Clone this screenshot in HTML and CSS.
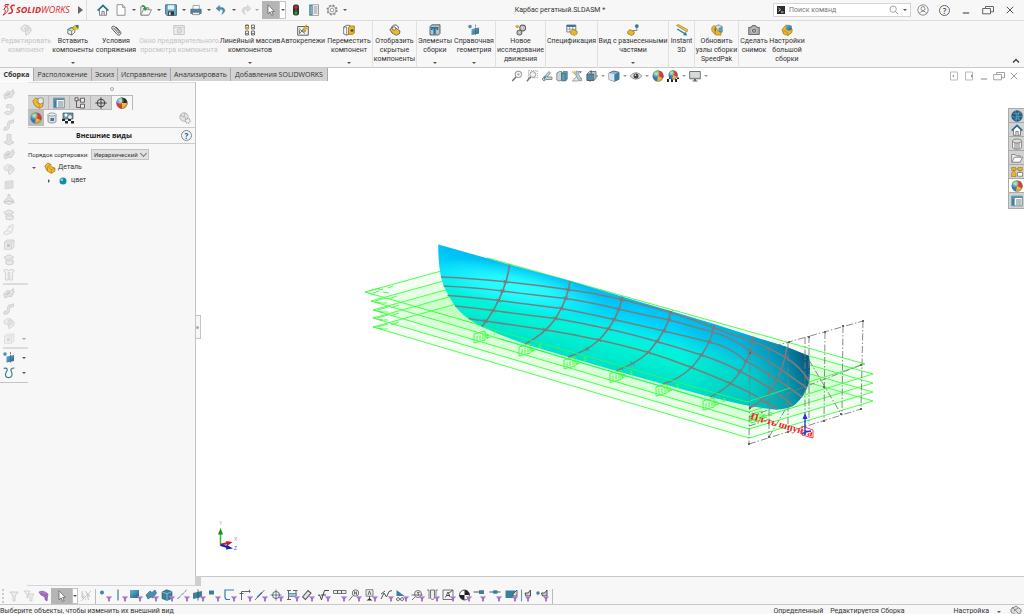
FILE: index.html
```html
<!DOCTYPE html>
<html lang="ru">
<head>
<meta charset="utf-8">
<title>Карбас регатный.SLDASM</title>
<link rel="stylesheet" href="styles.css">
</head>
<body>
<svg class="defs" width="0" height="0" aria-hidden="true">
  <defs>
    <linearGradient id="gb" x1="0" y1="0" x2="1" y2="1"><stop offset="0" stop-color="#6fb3d0"/><stop offset="1" stop-color="#1b6488"/></linearGradient>
    <radialGradient id="gs" cx=".35" cy=".3" r=".8"><stop offset="0" stop-color="#fff" stop-opacity=".75"/><stop offset=".5" stop-color="#fff" stop-opacity="0"/><stop offset="1" stop-color="#000" stop-opacity=".35"/></radialGradient>
    <symbol id="funnel" viewBox="0 0 6 6"><path d="M0 .4h6L3.9 3v2.6H2.1V3z" fill="#a06cc0"/><path d="M.3.4h5.4v.8H.9z" fill="#c9a5dc"/></symbol>
    <symbol id="home" viewBox="0 0 12 12"><path d="M2.5 5.5v5.8h7V5.5L6 2.2z" fill="#fff" stroke="#555" stroke-width=".7"/><path d="M.6 6.6 6 1.4l5.4 5.2" fill="none" stroke="#2b6f91" stroke-width="1.5"/><path d="M4.9 11.2V7.4h2.3v3.8" fill="#eee" stroke="#555" stroke-width=".7"/></symbol>
    <symbol id="doc" viewBox="0 0 12 12"><path d="M2 .7h5.5L10 3.3v8H2z" fill="#fff" stroke="#888" stroke-width=".9"/><path d="M7.4.7v2.7H10" fill="none" stroke="#888" stroke-width=".8"/></symbol>
    <symbol id="open" viewBox="0 0 12 12"><path d="M.8 11V2.6h3l1 1.2h4V11z" fill="#eee" stroke="#777" stroke-width=".8"/><path d="M.9 11.1 3.4 5.7h8.1L8.9 11.1z" fill="#fafafa" stroke="#777" stroke-width=".8"/><path d="M1.8 1.2c2-.8 3.6.5 4 2.5h1.7L5.1 7 2.8 3.9h1.4c-.3-1-.9-1.7-2.4-1.6z" fill="#2d9a37"/></symbol>
    <symbol id="save" viewBox="0 0 12 12"><path d="M.6.8h10.8v10.6H2L.6 10z" fill="#6aa8c6" stroke="#2c5d78" stroke-width=".8"/><path d="M2.8 1.2h6.4v4.3H2.8z" fill="#e6f0f5"/><path d="M3.2 7.4h5.8v4H3.2z" fill="#333"/><path d="M4 8.2h1.7v2.7H4z" fill="#ddd"/></symbol>
    <symbol id="print" viewBox="0 0 12 12"><path d="M3 1.5h6.3V6H3z" fill="#fff" stroke="#888" stroke-width=".7"/><path d="M.8 5.2h10.4v4.3H.8z" fill="#4b87a8" stroke="#355c70" stroke-width=".6"/><path d="M2.5 8.3h7v2.3h-7z" fill="#f2f2f2" stroke="#555" stroke-width=".6"/></symbol>
    <symbol id="undo" viewBox="0 0 12 12"><path d="M4.600 1.200 1 4.400l3.600 3.200V5.700C8 5 8.800 7 6.600 10.400 11.600 8 11 2.800 4.600 3.200z" fill="#4a8db3" stroke="#3b7290" stroke-width=".3"/></symbol>
    <symbol id="redo" viewBox="0 0 12 12"><path d="M7.400 1.200 11 4.400 7.400 7.600V5.700C4 5 3.200 7 5.400 10.400.4 8 1 2.800 7.400 3.200z" fill="#ddd" stroke="#bbb" stroke-width=".5"/></symbol>
    <symbol id="cursor" viewBox="0 0 12 12"><path d="M3 .8v9l2.1-2 1.6 3.6 1.5-.7-1.6-3.4h2.8z" fill="#fff" stroke="#555" stroke-width=".7"/></symbol>
    <symbol id="light" viewBox="0 0 12 12"><rect x="3" y=".4" width="6" height="11.2" rx="2.4" fill="#333"/><circle cx="6" cy="3.1" r="1.7" fill="#d22"/><circle cx="6" cy="6.1" r="1" fill="#555"/><circle cx="6" cy="9" r="1.7" fill="#2a9d3a"/></symbol>
    <symbol id="list" viewBox="0 0 12 12"><path d="M1.500.8h9v10.600h-9z" fill="#fff" stroke="#777" stroke-width=".7"/><path d="M1.700 1h3v10.200h-3z" fill="#4a89a9"/><path d="M5.500 3h4M5.500 5h4M5.500 7h4M5.500 9h4" stroke="#555" stroke-width=".7"/><path d="M2.500 3h1.300M2.500 5h1.300M2.500 7h1.300M2.500 9h1.300" stroke="#fff" stroke-width=".8"/></symbol>
    <symbol id="gear" viewBox="0 0 12 12"><circle cx="6" cy="6" r="4.700" fill="none" stroke="#888" stroke-width="1.700" stroke-dasharray="1.900 1.790"/><circle cx="6" cy="6" r="4" fill="#f5f5f5" stroke="#888" stroke-width=".8"/><circle cx="6" cy="6" r="1.800" fill="#fff" stroke="#888" stroke-width=".8"/></symbol>
    <symbol id="part" viewBox="0 0 12 12"><path d="M.8 4.2 3.7 1l3 1.2.5 2.5 3.9 1.5-.3 3L7.3 11.3 3 8.8z" fill="#f3bd2d" stroke="#9b7009" stroke-width=".7"/><path d="M3.9 4.4 6.7 2.3M3.8 4.4l-.6 4.3M7.3 7.7l3.6-1.5M7.3 7.7v3.5M3.8 4.4l3.5 3.3" fill="none" stroke="#a97c0e" stroke-width=".6"/></symbol>
    <symbol id="asmtab" viewBox="0 0 12 12"><path d="M.8 4.200 3.700 1l3 1.200.5 2.500 3.900 1.500-.3 3L7.300 11.300 3 8.800z" fill="#f3bd2d" stroke="#9b7009" stroke-width=".7"/><path d="M6 1.500 9 .7l2.300 1.200v3.800L8.500 7 6 5.500z" fill="#e4e9ec" stroke="#666" stroke-width=".6"/><path d="m3.800 4.400 3.500 3.300v3.500" fill="none" stroke="#a97c0e" stroke-width=".6"/></symbol>
    <symbol id="insert" viewBox="0 0 12 12"><path d="M.8 5.4 4.2 3.4l3.6 1v3.8L4.8 11 .8 9.6z" fill="#eef2e8" stroke="#555" stroke-width=".8"/><path d="M.8 5.4 4.6 7l3.2-2.6M4.6 7v4" fill="none" stroke="#555" stroke-width=".7"/><path d="M2.3 6.5c.5-3 2.2-3.6 4-3.2V1.8l2.4 2.5-2.4 2V5C4.8 4.6 3.5 5 2.3 6.5z" fill="#55b04c"/><circle cx="9" cy="3.4" r="2.7" fill="#f0bd33"/><path d="M8.500 1h3v3.400L9.400 3.300z" fill="#27789f"/></symbol>
    <symbol id="clip" viewBox="0 0 12 12"><path d="M3.300 3.600 8 8.800c.8.900 2-.2 1.200-1.100L4.600 2.600C3.200 1.100.7 3.200 2.200 4.900l4.700 5.300c2.200 2.300 5.200-.3 3.300-2.700L6 2.800" fill="none" stroke="#555" stroke-width="1"/></symbol>
    <symbol id="pat" viewBox="0 0 12 12"><g fill="#eee" stroke="#555" stroke-width=".8"><path d="M1.500 1h3v4h-3zM7.500 1h3v4h-3zM1.500 7h3v4h-3zM7.500 7h3v4h-3z"/></g><path d="M1.500 2.800h3V5h-3z" fill="#e3a91d"/><path d="M2 1.400h2M8 3.500h2M2 9.500h2M8 9.500h2" stroke="#555" stroke-width=".7"/></symbol>
    <symbol id="auto" viewBox="0 0 12 12"><path d="M.7 2.500h10.600v8.700H.7z" fill="#eee" stroke="#555" stroke-width=".9"/><path d="m2 10 6-6M2 4.500l6 5M4 7h5M2.500 6v3" stroke="#666" stroke-width=".8"/><path d="m9.500.5-4 5 2-.2-1 3.500 4-5-2 .2z" fill="#f2b92b" stroke="#a67809" stroke-width=".4"/></symbol>
    <symbol id="move" viewBox="0 0 12 12"><path d="M.7 3 3.500 1.300h3v8.500L3.700 11.200.7 10z" fill="#fff" stroke="#555" stroke-width=".8"/><path d="M.7 3h3v8" fill="none" stroke="#555" stroke-width=".7"/><path d="M5.500 3.500 7 2h4.300v7L9.800 10.300H5.500z" fill="#f0b929" stroke="#8d6500" stroke-width=".7"/><path d="m7 6.500 2-1.700 2 1.700-2 1.700z" fill="#555"/></symbol>
    <symbol id="gears" viewBox="0 0 12 12"><g fill="#ddd" stroke="#666" stroke-width="1.100"><circle cx="7.700" cy="4" r="2.900"/><circle cx="4.400" cy="8.600" r="2.400"/></g><circle cx="7.700" cy="4" r="1.100" fill="#fff" stroke="#777" stroke-width=".5"/><circle cx="4.400" cy="8.600" r=".9" fill="#fff" stroke="#777" stroke-width=".5"/><circle cx="2.200" cy="2.600" r="1.700" fill="#dca325"/></symbol>
    <symbol id="ballgear" viewBox="0 0 12 12"><circle cx="5" cy="5" r="4.200" fill="#e3e3e3" stroke="#aaa" stroke-width=".8"/><path d="M5 5 1.500 3.500M5 5l1-4M5 5l3 2.500" stroke="#aaa" stroke-width=".8"/><circle cx="8.800" cy="8.800" r="2.300" fill="#f4f4f4" stroke="#999" stroke-width="1.100" stroke-dasharray="1.200 .6"/></symbol>
    <symbol id="hidden" viewBox="0 0 12 12"><path d="M2.500 4.500c0-4.700 7-4.700 7 0" fill="none" stroke="#666" stroke-width="1"/><path d="M.8 5.500 3.700 3l3 1 4.300 3-.4 2.500-3.300 1.800L3 9z" fill="#efb928" stroke="#555" stroke-width=".8"/><circle cx="5" cy="4.500" r="1.700" fill="#eee" stroke="#555" stroke-width=".7"/></symbol>
    <symbol id="elem" viewBox="0 0 12 12"><path d="M1 2.500 3 .8h8v8.700L9.500 11H1z" fill="#b3c3cb" stroke="#444" stroke-width=".8"/><path d="M2 3h7.300v3H7.500V4.600H6.700v6H4.500v-6h-.8V6H2z" fill="#2b7198"/></symbol>
    <symbol id="refgeo" viewBox="0 0 12 12"><path d="m3.500 5 7.500-1.500v6L3.500 11z" fill="url(#gb)"/><circle cx="2" cy="2.600" r="1.800" fill="#4b92b5"/><path d="M7.500.6v10.900" stroke="#555" stroke-width=".7" stroke-dasharray="2 .8"/></symbol>
    <symbol id="bom" viewBox="0 0 12 12"><path d="M.8 1h9v7h-9z" fill="#fff" stroke="#555" stroke-width=".7"/><path d="M.8 1h9v2h-9z" fill="#347b9f"/><path d="M3.800 1v7M6.800 1v7M.8 5.200h9" stroke="#666" stroke-width=".6"/><path d="m4.700 7.300 2.200-2 4.300 2v2.500L8.500 11.500 4.700 10z" fill="#edb52c" stroke="#856209" stroke-width=".5"/></symbol>
    <symbol id="explode" viewBox="0 0 12 12"><circle cx="9.800" cy="2.100" r="1.900" fill="#2d7ba0"/><path d="M9.800 3.500v3H5.500" fill="none" stroke="#555" stroke-width=".7"/><path d="m.7 7.500 2.200-2 4.400 2.300-.3 2.300-2.500 1.400L.7 9.700z" fill="#edb52c" stroke="#856209" stroke-width=".6"/></symbol>
    <symbol id="instant" viewBox="0 0 12 12"><path d="m.5 1.500 1.700-1L11.500 5.500 11 8z" fill="#f4cd46" stroke="#916d0c" stroke-width=".6"/><path d="m2.500 2.500.8-.8M4.500 3.700l.8-.8M6.500 5l.8-.8" stroke="#755" stroke-width=".5"/><path d="m.8 5.500 7 4.300-.5 1.500 4 .2-2-3.700-.7 1L1.500 4.600z" fill="#2f7da3"/></symbol>
    <symbol id="speed" viewBox="0 0 12 12"><path d="M4 2.500 7.500.8l3.700 1.700v5.600L7.500 10z" fill="#d9e2e6" stroke="#555" stroke-width=".6"/><path d="M7.500 4v6l3.700-1.900V2.500z" fill="#5b9cbb"/><path d="M.8 3.500 3 1.300l5 6.500 2 .3v3H4.500L.8 7z" fill="#eeb52a" stroke="#856209" stroke-width=".5"/><path d="M4.200 4v3.500M4.200 8.500v1" stroke="#444" stroke-width=".9"/></symbol>
    <symbol id="camera" viewBox="0 0 12 12"><path d="M.7 3.300h2.500l1-1.700h3.500l1 1.700h2.600v7.200H.7z" fill="#aaa" stroke="#555" stroke-width=".8"/><circle cx="6" cy="6.700" r="2.600" fill="#666" stroke="#eee" stroke-width=".7"/><circle cx="6" cy="6.700" r="1" fill="#bbb"/></symbol>
    <symbol id="large" viewBox="0 0 12 12"><path d="M1 5.500 5 1l3 .5 3.200 4-.4 3L7 11.500 2.500 10z" fill="#eeb52a" stroke="#856209" stroke-width=".6"/><path d="M5 2 7.500.8l3.200 1v3.700L8 6.800 5 5.500z" fill="url(#gb)"/><path d="m2 6 5 3v2.500" fill="none" stroke="#987316" stroke-width=".5"/></symbol>
    <symbol id="ghost" viewBox="0 0 12 12"><path d="M.8 4 4.500 1l3.500.7 3.200 3-.5 3L6 11.300 5.500 7.500 2 6.500z" fill="#ececec" stroke="#c6c6c6" stroke-width=".9"/><circle cx="7" cy="5" r="2.200" fill="#ddd" stroke="#c4c4c4" stroke-width=".6"/></symbol>
    <symbol id="preview" viewBox="0 0 12 12"><path d="M.8 1.500h10.500v9H.8z" fill="#eee" stroke="#c8c8c8"/><path d="M.8 3.300h10.500" stroke="#ccc"/><path d="m4.300 5.500 2-1.500 2.500 1v3l-2.200 1.500-2.300-1z" fill="#ddd" stroke="#bbb" stroke-width=".6"/></symbol>
    <symbol id="zoomf" viewBox="0 0 12 12"><circle cx="7.400" cy="4.400" r="3.300" fill="#eef4f7" stroke="#888" stroke-width=".9"/><path d="m5 7-3.800 4" stroke="#777" stroke-width="1.500"/><path d="M6 4.400h3M7.400 3v3" stroke="#999" stroke-width=".6"/></symbol>
    <symbol id="zooma" viewBox="0 0 12 12"><path d="M2.500.7h8.800v7H2.500z" fill="none" stroke="#888" stroke-width=".7" stroke-dasharray="1.300 .9"/><circle cx="6.800" cy="4.500" r="2.900" fill="#eef4f7" stroke="#888" stroke-width=".8"/><path d="m4.700 6.700-3.800 4.500" stroke="#777" stroke-width="1.400"/></symbol>
    <symbol id="prev" viewBox="0 0 12 12"><path d="m1 9 7-7.500 1.500 1.500L6 7h5v2.500H5L3 11z" fill="#cdd6da" stroke="#777" stroke-width=".8"/><path d="m2 7 4-1.500L3.500 10z" fill="#4f8ba8"/></symbol>
    <symbol id="section" viewBox="0 0 12 12"><path d="M.8 3 3.500 1.500h2V10L3 11.200.8 10z" fill="#c7d4da" stroke="#555" stroke-width=".6"/><path d="m5.500 3.500 1.800-2h4v7.700l-2 1.800H5.500z" fill="#5e9bb9" stroke="#45606d" stroke-width=".6"/><path d="M5.500 3.500h3.800V11" fill="none" stroke="#3c6277" stroke-width=".6"/></symbol>
    <symbol id="dyn" viewBox="0 0 12 12"><path d="m1 1.500 5 4.500-4.500 5h5L11 8" fill="#eee" stroke="#888" stroke-width=".8"/><path d="m5.500 1 3 .5L7.500 4l3.500 6.500-3 .5-3-5z" fill="#b8cdd7" stroke="#777" stroke-width=".6"/><path d="m8.500 1 2.500.5-2 2z" fill="#3a7fa1"/><path d="m2.500 1 3 .6-1.500 3z" fill="#eeb52a"/></symbol>
    <symbol id="orient" viewBox="0 0 12 12"><path d="m1 4 2.500-2.500H10v6.700l-2.200 2.300H1z" fill="#b9cad2" stroke="#48545a" stroke-width=".7"/><path d="M1 4h6.800v6.500H1z" fill="#4f8ba9" stroke="#48545a" stroke-width=".6"/><path d="M5.200 4V.3M10 6h2M4 10.500v1.300" stroke="#444" stroke-width=".8"/></symbol>
    <symbol id="cube" viewBox="0 0 12 12"><path d="M1 3 5.500 1 11 2.300v7L6.500 11.300 1 9.500z" fill="#8fbbd0" stroke="#44525a" stroke-width=".8"/><path d="m1 3 5.500 1.500v6.800L1 9.500z" fill="#d8e4ea"/><path d="M11 2.300 6.500 4.500v6.800L11 9.300z" fill="#3580a3"/></symbol>
    <symbol id="eye" viewBox="0 0 12 12"><path d="M.3 6.200C3 1.700 9 1.700 11.700 6.200 9 10 3 10 .3 6.200z" fill="#ddd" stroke="#777" stroke-width=".8"/><circle cx="6" cy="6" r="2.500" fill="#444"/><circle cx="5.400" cy="5.300" r=".8" fill="#fff"/></symbol>
    <symbol id="ball" viewBox="0 0 12 12"><circle cx="6" cy="6" r="5.500" fill="#2f6fb5"/><path d="M6 6 1 3.700A5.500 5.500 0 0 1 7.500.7z" fill="#39a845"/><path d="M7.500.7A5.500 5.500 0 0 1 11 8.200L6 6z" fill="#d8342b"/><path d="M11 8.200A5.500 5.500 0 0 1 5 11.400L6 6z" fill="#f0b92c"/><circle cx="6" cy="6" r="5.500" fill="url(#gs)"/></symbol>
    <symbol id="ballk" viewBox="0 0 12 12"><circle cx="6" cy="6" r="5.500" fill="#222"/><path d="M6 6H.5A5.500 5.500 0 0 1 6 .5z" fill="#3b84d0"/><path d="M6 6v5.500A5.500 5.500 0 0 1 .5 6z" fill="#d8342b"/><path d="M6 6h5.500A5.500 5.500 0 0 1 6 11.500z" fill="#f0b92c"/><path d="M6 .5V6L2 2.200A5.500 5.500 0 0 1 6 .5z" fill="#4caf50"/><circle cx="6" cy="6" r="5.500" fill="url(#gs)"/></symbol>
    <symbol id="scene" viewBox="0 0 12 12"><path d="M0 9h2v3H0zM4 9h2v3H4zM8 9h2v3H8zM2 7.500h2V9H2zM10 7.500h2V9h-2z" fill="#222"/><use href="#ball" x="1" y="0" width="10" height="10"/></symbol>
    <symbol id="monitor" viewBox="0 0 12 12"><path d="M.7 1.500h10.600v7.300H.7z" fill="#b9b9b9" stroke="#666" stroke-width=".9"/><path d="M1.300 2h9.400v5.500H1.300z" fill="#d5dadd"/><path d="M5 9v1.500H3.500v1h5v-1H7V9z" fill="#666"/></symbol>
    <symbol id="min" viewBox="0 0 12 12"><path d="M2.800 9h6.400" stroke="currentColor" stroke-width="1.200"/></symbol>
    <symbol id="rest" viewBox="0 0 12 12"><path d="M3.500 4V2.500h8v5.300H8.500M.7 4.500h7.800v5.300H.7z" fill="none" stroke="currentColor" stroke-width=".9"/></symbol>
    <symbol id="x" viewBox="0 0 12 12"><path d="m2.800 2.800 6.400 6.400m0-6.400L2.800 9.200" stroke="currentColor" stroke-width="1"/></symbol>
    <symbol id="pl" viewBox="0 0 12 12"><path d="M2.500 2h7v8h-7z" fill="#fff" stroke="#bbb"/><path d="M6 4.500 4.200 6 6 7.500z" fill="#999"/></symbol>
    <symbol id="pr" viewBox="0 0 12 12"><path d="M2.500 2h7v8h-7z" fill="#fff" stroke="#bbb"/><path d="m8.200 4.500 1.800 1.500-1.800 1.500z" fill="#777"/></symbol>
    <symbol id="mag" viewBox="0 0 12 12"><circle cx="5" cy="5" r="3.800" fill="none" stroke="#888" stroke-width=".9"/><path d="m7.700 7.700 3.500 3.500" stroke="#888" stroke-width="1"/></symbol>
    <symbol id="user" viewBox="0 0 12 12"><circle cx="6" cy="6" r="5.200" fill="none" stroke="#777" stroke-width=".8"/><circle cx="6" cy="4.600" r="2" fill="none" stroke="#777" stroke-width=".8"/><path d="M2.600 9.800c.4-3.400 6.400-3.400 6.800 0" fill="none" stroke="#777" stroke-width=".8"/></symbol>
    <symbol id="tree" viewBox="0 0 12 12"><path d="M2.500 1v9.500H6M2.500 3h4" fill="none" stroke="#555" stroke-width=".9"/><path d="M1 .8h3v3H1zM6.500 1.200h4v4h-4zM6.500 7.200h4v3.800h-4z" fill="#eee" stroke="#555" stroke-width=".9"/></symbol>
    <symbol id="target" viewBox="0 0 12 12"><circle cx="6" cy="6" r="3.800" fill="none" stroke="#333" stroke-width=".9"/><path d="M6 .3v11.400M.3 6h11.400" stroke="#333" stroke-width=".9"/></symbol>
    <symbol id="props" viewBox="0 0 12 12"><path d="M.7 1.200h10.600v9.600H.7z" fill="#fff" stroke="#4a6d7e" stroke-width=".7"/><path d="M.7 1.200h10.600v1.900H.7zM.7 3h3v7.800h-3z" fill="#4c93b5"/><path d="M5 5h5.300M5 7h5.300M5 9h5.300M1.500 5h1.300M1.500 7h1.300M1.500 9h1.300" stroke="#345" stroke-width=".7"/></symbol>
    <symbol id="decal" viewBox="0 0 12 12"><path d="M2 2.500v7c0 2 8 2 8 0v-7z" fill="#ddd" stroke="#777" stroke-width=".7"/><ellipse cx="6" cy="2.500" rx="4" ry="1.500" fill="#f5f5f5" stroke="#777" stroke-width=".7"/><path d="M4.500 6h3.500v3H4.500z" fill="#3a7fa2"/></symbol>
    <symbol id="scenes" viewBox="0 0 12 12"><path d="M1 1h10v6H1z" fill="#63a5c4" stroke="#333" stroke-width=".6"/><circle cx="4" cy="3" r="1.500" fill="#fff"/><circle cx="8" cy="5" r="2.300" fill="#eee" stroke="#555" stroke-width=".6"/><path d="M0 7h3v2H0zM6 7h3v2H6zM3 9h3v2.500H3zM9 9h3v2.500H9z" fill="#222"/></symbol>
    <symbol id="folder" viewBox="0 0 12 12"><path d="M.7 10V2.500h3.500l1 1.300h4V10z" fill="#eee" stroke="#777" stroke-width=".8"/><path d="m.9 10.200 2.500-5h8.200l-2.500 5z" fill="#fafafa" stroke="#777" stroke-width=".8"/></symbol>
    <symbol id="lib" viewBox="0 0 12 12"><path d="M1.500 3v6c0 3 9 3 9 0V3z" fill="#f2f2f2" stroke="#777" stroke-width=".8"/><ellipse cx="6" cy="3" rx="4.500" ry="2" fill="#ddd" stroke="#777" stroke-width=".8"/><path d="M4 5v6M6 5v6M8 5v6" fill="none" stroke="#777" stroke-width=".9"/></symbol>
    <symbol id="palette" viewBox="0 0 12 12"><path d="M.7 1.500h4v3h-4zM7 1.500h4.300v3H7zM2.700 4.500 5 7.500v3H.5v-3z" fill="#edb52c" stroke="#9c7610" stroke-width=".6"/><path d="M6.500 6.500h5v3.700h-5z" fill="#fff" stroke="#666" stroke-width=".7"/><path d="M5 3h2M9 4.500v2" stroke="#666" stroke-width=".7"/></symbol>
    <symbol id="globe" viewBox="0 0 12 12"><circle cx="6" cy="6" r="5.700" fill="#1f5f7f"/><path d="M2 3c3 2 5 0 8 0M1 6.500c3 2 7-1 10 0M3 10c2-2 4-1 6-1M4 1l2 4-1 6M8 1 7 6l1 4" fill="none" stroke="#76b0cb" stroke-width=".6"/></symbol>
    <symbol id="curve" viewBox="0 0 12 12"><path d="M.7 1.800C4.500.8 5 3 3.300 5.500 1.500 8.500 2.500 11.200 5.500 11.200S10 8.500 8.500 5.500C7 3 8 1.500 11.500 1.500" fill="none" stroke="#3b7b9c" stroke-width="1.200"/></symbol>
    <symbol id="g-boss" viewBox="0 0 12 12"><path d="m.8 6.500 4-4L7 4l3-3 1.300 3.500-3.300 5-2-1L2 10.500z" fill="#ddd" stroke="#bbb" stroke-width=".8"/><path d="m3 7 4-2" stroke="#aaa"/></symbol>
    <symbol id="g-rev" viewBox="0 0 12 12"><path d="M3 2c5-3 9 1 7.500 5-1.500 4.500-7 5.500-9 2l3-1.500c2 2 4 0 3.500-2C7.500 4 6 3.500 4 4.500z" fill="#e2e2e2" stroke="#c0c0c0" stroke-width=".8"/></symbol>
    <symbol id="g-sweep" viewBox="0 0 12 12"><path d="M1 10c0-2 2-1 3-2 1.500-2-.5-4 2-5.500 1.500-.8 2.500.3 4.500-1.500v3C9 5.500 8 4 7 5c-1 1.500.5 4-2 6-1.500 1-2.500 0-4 1z" fill="#ddd" stroke="#bbb" stroke-width=".7"/></symbol>
    <symbol id="g-loft" viewBox="0 0 12 12"><path d="M4 1h4v6l3 2-5 2.500L1 9l3-2z" fill="#ddd" stroke="#c0c0c0" stroke-width=".8"/></symbol>
    <symbol id="g-box" viewBox="0 0 12 12"><path d="M1.500 3.500 4 1.500h7v7l-2.500 2.300h-7z" fill="#e6e6e6" stroke="#c2c2c2" stroke-width=".8"/><path d="M1.500 3.500h7v7.300M8.500 3.500 11 1.500" fill="none" stroke="#c2c2c2" stroke-width=".7"/><path d="M4 5.500h3v3H4z" fill="#bbb"/></symbol>
    <symbol id="g-plane" viewBox="0 0 12 12"><path d="m2 3 8-1v7.500l-8 1z" fill="#d9d9d9" stroke="#ccc" stroke-width=".8"/></symbol>
    <symbol id="g-dome" viewBox="0 0 12 12"><path d="M5 1h2v4c3 0 4 2 4 4l-5 2-5-2c0-2 1-4 4-4z" fill="#e6e6e6" stroke="#bdbdbd" stroke-width=".8"/><path d="M1 9c2-2 8-2 10 0" fill="none" stroke="#aaa" stroke-width=".9"/></symbol>
    <symbol id="g-wrap" viewBox="0 0 12 12"><path d="M.8 4 5 1.500c2 0 4 1 6 2.500L8 5.500c2 1 3 2.500 2 5-2 1-4 1-7 0V6z" fill="#e6e6e6" stroke="#bdbdbd" stroke-width=".8"/><path d="M3 6c2-1 3-.5 5-.5M3 8c2-1 5-1 7 0" fill="none" stroke="#bbb" stroke-width=".7"/></symbol>
    <symbol id="g-bend" viewBox="0 0 12 12"><path d="M1 8.500 4.500 7l1-4L10 1v4L8.500 9 4 11l-3-.5z" fill="#f3f3f3" stroke="#c6c6c6" stroke-width=".8"/><path d="m4.500 7 4 2M5.500 3l4 2" stroke="#ccc" stroke-width=".7"/></symbol>
    <symbol id="g-rib" viewBox="0 0 12 12"><path d="M1 1.500 4 1l2 1 2-1 3 .5V3L9.500 4v7.500H6.700V4H5.300v7.500H2.500V4L1 3z" fill="#f0f0f0" stroke="#c2c2c2" stroke-width=".8"/></symbol>

    <symbol id="f1" viewBox="0 0 14 14"><circle cx="4" cy="3.500" r="2" fill="#3f86aa"/><use href="#funnel" x="8" y="7" width="6" height="6"/></symbol>
    <symbol id="f2" viewBox="0 0 14 14"><path d="M4 .5v11" stroke="#2f6f90" stroke-width="1.100"/><use href="#funnel" x="8" y="7" width="6" height="6"/></symbol>
    <symbol id="f3" viewBox="0 0 14 14"><path d="M1 1h9v8H1z" fill="url(#gb)"/><use href="#funnel" x="8" y="7" width="6" height="6"/></symbol>
    <symbol id="f4" viewBox="0 0 14 14"><path d="m1 6 4-4 2 1.500L10 1l1.500 3L8 9 6 8 3 10z" fill="#4b8fb0" stroke="#285b74" stroke-width=".6"/><use href="#funnel" x="8" y="7" width="6" height="6"/></symbol>
    <symbol id="f5" viewBox="0 0 14 14"><path d="M1 3 5.500.8 11 2.500v6.800L6 11.500 1 9.500z" fill="#3a7fa1" stroke="#265167" stroke-width=".6"/><path d="m1 3 5 1.700v6.800M6 4.700l5-2.200" fill="none" stroke="#a5cddd" stroke-width=".7"/><use href="#funnel" x="8" y="7" width="6" height="6"/></symbol>
    <symbol id="f6" viewBox="0 0 14 14"><path d="m1.500 10 9-9" stroke="#3a7fa1" stroke-width="1" stroke-dasharray="4 1"/><use href="#funnel" x="8" y="7" width="6" height="6"/></symbol>
    <symbol id="f7" viewBox="0 0 14 14"><path d="m1 4 9-2v6l-9 2z" fill="#3a7fa1"/><path d="M6 .5v11" stroke="#444" stroke-width=".8"/><use href="#funnel" x="8" y="7" width="6" height="6"/></symbol>
    <symbol id="f8" viewBox="0 0 14 14"><path d="M2 1.500h5v4H2z" fill="#3a7fa1"/><use href="#funnel" x="8" y="7" width="6" height="6"/></symbol>
    <symbol id="f9" viewBox="0 0 14 14"><path d="M11 1H2v7c0 1.500 1 2.500 2.500 2.500H7" fill="none" stroke="#3a7fa1" stroke-width="1.200"/><use href="#funnel" x="8" y="7" width="6" height="6"/></symbol>
    <symbol id="f10" viewBox="0 0 14 14"><path d="M2.500 11V2.500h9M.5 4.500h4M10.500.7v3" fill="none" stroke="#555" stroke-width=".9"/><use href="#funnel" x="8" y="7" width="6" height="6"/></symbol>
    <symbol id="f11" viewBox="0 0 14 14"><path d="m1 11 9.500-10" stroke="#666" stroke-width=".9"/><path d="m3 8.500 5-5" stroke="#3a7fa1" stroke-width="1.500"/><use href="#funnel" x="8" y="7" width="6" height="6"/></symbol>
    <symbol id="f12" viewBox="0 0 14 14"><circle cx="6" cy="6" r="3.500" fill="none" stroke="#555" stroke-width=".9"/><path d="M6 .5v11M.5 6h11" stroke="#3f6b80" stroke-width=".8"/><use href="#funnel" x="8" y="7" width="6" height="6"/></symbol>
    <symbol id="f13" viewBox="0 0 14 14"><path d="M1 1.500h4M1 10.500h4M7 1.500h4.500M2.500 1.500v9M10 1.500V7" stroke="#555" stroke-width=".9"/><path d="M2.500 4.500H10v3H2.500z" fill="#9dc3d5" stroke="#47768c" stroke-width=".7"/><use href="#funnel" x="8" y="7" width="6" height="6"/></symbol>
    <symbol id="f14" viewBox="0 0 14 14"><path d="M1.500 8 7 1.500l3 2.500-5.500 6.500z" fill="#dce6ea" stroke="#555" stroke-width="1.100"/><use href="#funnel" x="8" y="7" width="6" height="6"/></symbol>
    <symbol id="f15" viewBox="0 0 14 14"><path d="m1 6.500 1.500-.7 2 5L7.500 1.500H12M4 6h5" fill="none" stroke="#444" stroke-width="1"/><use href="#funnel" x="8" y="7" width="6" height="6"/></symbol>
    <symbol id="f16" viewBox="0 0 14 14"><path d="M.5 1.500h4v3h-4zM4.500 1.500h4v3h-4zM8.500 1.500h4.500v3H8.500z" fill="#eee" stroke="#555" stroke-width=".8"/><use href="#funnel" x="8" y="7" width="6" height="6"/></symbol>
    <symbol id="f17" viewBox="0 0 14 14"><circle cx="7.500" cy="4" r="3.200" fill="#eee" stroke="#666" stroke-width=".9"/><path d="m5 6.500-4 5M6.500 5.500v-3l2 3v-3" fill="none" stroke="#555" stroke-width=".8"/><use href="#funnel" x="8" y="7" width="6" height="6"/></symbol>
    <symbol id="f18" viewBox="0 0 14 14"><path d="M2 .7h7v6.500H2z" fill="#eee" stroke="#666" stroke-width=".8"/><path d="m4 6 1.500-4L7 6M5.500 7v3" fill="none" stroke="#444" stroke-width=".8"/><path d="M2.500 11.500 5.500 9l3 2.500z" fill="#333"/><use href="#funnel" x="8" y="7" width="6" height="6"/></symbol>
    <symbol id="f19" viewBox="0 0 14 14"><path d="m1 10 3-6 2.500 4L9 2.500l3-1M1 5l4-3" fill="none" stroke="#555" stroke-width="1"/><use href="#funnel" x="8" y="7" width="6" height="6"/></symbol>
    <symbol id="f20" viewBox="0 0 14 14"><path d="M1.500 1v6h8z" fill="#3a7fa1"/><path d="M1.500 11c0-3 3-3 3-1s-2 2-3 1zm4 0c0-3 3-3 3-1s-2 2-3 1z" fill="#eee" stroke="#444" stroke-width=".8"/><use href="#funnel" x="8" y="7" width="6" height="6"/></symbol>
    <symbol id="f21" viewBox="0 0 14 14"><circle cx="7" cy="5" r="3.500" fill="#eee" stroke="#666" stroke-width=".9"/><path d="M.5 6h11M4 8l-3 3M6 3.500h2.500M7.200 3.500V7" stroke="#555" stroke-width=".8"/><use href="#funnel" x="8" y="7" width="6" height="6"/></symbol>
    <symbol id="f22" viewBox="0 0 14 14"><path d="M1 1h2v9M12 1h-2v6" fill="none" stroke="#777" stroke-width=".9"/><path d="M4.500 1h4v8l-2 2-2-2z" fill="#eee" stroke="#555" stroke-width=".8"/><use href="#funnel" x="8" y="7" width="6" height="6"/></symbol>
    <symbol id="f23" viewBox="0 0 14 14"><path d="M1 1h10v9.500H1z" fill="#f5f5f5" stroke="#666" stroke-width=".9"/><path d="M3.500 8.500 6 3l2 5M4.500 6.500H8M7 4l4-3" fill="none" stroke="#444" stroke-width=".9"/><use href="#funnel" x="8" y="7" width="6" height="6"/></symbol>
    <symbol id="f24" viewBox="0 0 14 14"><circle cx="6.500" cy="6" r="5" fill="#fff" stroke="#333" stroke-width=".8"/><path d="M6.500 6V1a5 5 0 0 1 5 5zM6.500 6v5a5 5 0 0 1-5-5z" fill="#222"/><use href="#funnel" x="8" y="7" width="6" height="6"/></symbol>
    <symbol id="f25" viewBox="0 0 14 14"><path d="M.5 3h6" stroke="#444" stroke-width=".9"/><path d="M6 1.200h5V5H6z" fill="#3a7fa1"/><use href="#funnel" x="7" y="7" width="6" height="6"/></symbol>
    <symbol id="f26" viewBox="0 0 14 14"><path d="M.5 3h11" stroke="#444" stroke-width=".9"/><rect x="4" y="1.200" width="4.500" height="3.600" rx="1" fill="#3a7fa1"/><use href="#funnel" x="7" y="7" width="6" height="6"/></symbol>
    <symbol id="f27" viewBox="0 0 14 14"><path d="M.5 1.500h10v7.500H.5z" fill="#3a7fa1"/><path d="M8 5 12 1v6H8z" fill="#ddd" stroke="#444" stroke-width=".8"/><use href="#funnel" x="7" y="7" width="6" height="6"/></symbol>
    <symbol id="f28" viewBox="0 0 14 14"><path d="M1.500.5v12" stroke="#5c9ab7" stroke-width="1.100"/><path d="M5 4h3l2.500-3v6H6z" fill="#ccc" stroke="#444" stroke-width=".9"/><use href="#funnel" x="5" y="7" width="6" height="6"/></symbol>
    <symbol id="f29" viewBox="0 0 14 14"><circle cx="2" cy="4" r="1.700" fill="#3a7fa1"/><path d="M5.500 4h3L11 1v6H6.500z" fill="#ccc" stroke="#444" stroke-width=".9"/><use href="#funnel" x="7" y="7" width="6" height="6"/></symbol>
  </defs>
</svg>

<div class="app">
  <header class="titlebar">
    <div class="brand">
      <svg class="mark" viewBox="0 0 14 14" aria-hidden="true"><path d="M3.500 1.500h3.200L4.500 4.200c3 .5 1.500 6-3.500 8 2.800-3 3.200-5.500.8-5.700L4.200 3.200H2.800z" fill="none" stroke="#d92b2b" stroke-width="1"/><path d="M12.800 2.500C9.500 1.800 7.800 4 9.600 6c1.600 1.800 1 4.200-3.200 4.500" fill="none" stroke="#d92b2b" stroke-width="1.500"/></svg>
      <span class="wordmark"><b>SOLID</b>WORKS</span>
    </div>
    <button class="expand" aria-label="Меню"></button>
    <nav class="quick">
      <button class="ic" aria-label="Домой"><svg><use href="#home"/></svg></button><span class="gap"></span>
      <button class="ic" aria-label="Новый"><svg><use href="#doc"/></svg></button><button class="dd" aria-label="Ещё"></button>
      <button class="ic" aria-label="Открыть"><svg><use href="#open"/></svg></button><button class="dd" aria-label="Ещё"></button>
      <button class="ic" aria-label="Сохранить"><svg><use href="#save"/></svg></button><button class="dd" aria-label="Ещё"></button>
      <button class="ic" aria-label="Печать"><svg><use href="#print"/></svg></button><button class="dd" aria-label="Ещё"></button>
      <button class="ic" aria-label="Отменить"><svg><use href="#undo"/></svg></button><button class="dd" aria-label="Ещё"></button>
      <button class="ic" aria-label="Повторить"><svg><use href="#redo"/></svg></button><button class="dd faint narrow" aria-label="Ещё"></button>
      <button class="ic picked" aria-label="Выбрать"><svg><use href="#cursor"/></svg></button><button class="dd boxed" aria-label="Ещё"></button>
      <span class="gap short"></span>
      <button class="ic" aria-label="Перестроить"><svg><use href="#light"/></svg></button><span class="gap"></span>
      <button class="ic" aria-label="Свойства файла"><svg><use href="#list"/></svg></button><span class="gap"></span>
      <button class="ic" aria-label="Параметры"><svg><use href="#gear"/></svg></button><button class="dd" aria-label="Ещё"></button>
    </nav>
    <h1 class="doc-title">Карбас регатный.SLDASM *</h1>
    <div class="title-right">
      <label class="search"><svg class="prompt" viewBox="0 0 8 8" aria-hidden="true"><path d="M0 0h8v8H0z" fill="#2c2c2c"/><path d="m1.500 2 2 1.700-2 1.700M4 6h2.500" fill="none" stroke="#fff" stroke-width=".8"/></svg><input type="text" placeholder="Поиск команд" aria-label="Поиск команд"><svg class="mag"><use href="#mag"/></svg><span class="caret"></span></label>
      <div class="win">
        <button class="ic" aria-label="Вход"><svg><use href="#user"/></svg></button>
        <button class="round" aria-label="Справка">?</button>
        <button class="ic" aria-label="Свернуть"><svg><use href="#min"/></svg></button>
        <button class="ic" aria-label="Восстановить"><svg><use href="#rest"/></svg></button>
        <button class="ic" aria-label="Закрыть"><svg><use href="#x"/></svg></button>
      </div>
    </div>
  </header>

  <div class="ribbon">
    <button class="cmd" disabled><svg><use href="#ghost"/></svg><span>Редактировать<br>компонент</span></button>
    <button class="cmd"><svg><use href="#insert"/></svg><span>Вставить<br>компоненты</span><i class="caret"></i></button>
    <button class="cmd"><svg><use href="#clip"/></svg><span>Условия<br>сопряжения</span></button>
    <button class="cmd" disabled><svg><use href="#preview"/></svg><span>Окно предварительного<br>просмотра компонента</span></button>
    <button class="cmd"><svg><use href="#pat"/></svg><span>Линейный массив<br>компонентов</span><i class="caret"></i></button>
    <button class="cmd"><svg><use href="#auto"/></svg><span>Автокрепежи</span></button>
    <button class="cmd end"><svg><use href="#move"/></svg><span>Переместить<br>компонент</span><i class="caret"></i></button>
    <button class="cmd end"><svg><use href="#hidden"/></svg><span>Отобразить<br>скрытые<br>компоненты</span></button>
    <button class="cmd"><svg><use href="#elem"/></svg><span>Элементы<br>сборки</span><i class="caret"></i></button>
    <button class="cmd end"><svg><use href="#refgeo"/></svg><span>Справочная<br>геометрия</span><i class="caret"></i></button>
    <button class="cmd end"><svg><use href="#gears"/></svg><span>Новое<br>исследование<br>движения</span></button>
    <button class="cmd end"><svg><use href="#bom"/></svg><span>Спецификация</span></button>
    <button class="cmd end"><svg><use href="#explode"/></svg><span>Вид с разнесенными<br>частями</span><i class="caret"></i></button>
    <button class="cmd end"><svg><use href="#instant"/></svg><span>Instant<br>3D</span></button>
    <button class="cmd end"><svg><use href="#speed"/></svg><span>Обновить<br>узлы сборки<br>SpeedPak</span></button>
    <button class="cmd"><svg><use href="#camera"/></svg><span>Сделать<br>снимок</span></button>
    <button class="cmd"><svg><use href="#large"/></svg><span>Настройки<br>большой<br>сборки</span></button>
    <button class="collapse" aria-label="Свернуть ленту"><svg viewBox="0 0 8 6"><path d="m1 4.500 3-3 3 3" fill="none" stroke="#444" stroke-width="1.500"/></svg></button>
  </div>

  <div class="tabrow">
    <nav class="tabs">
      <button class="on">Сборка</button><button>Расположение</button><button>Эскиз</button><button>Исправление</button><button>Анализировать</button><button>Добавления SOLIDWORKS</button>
    </nav>
    <div class="headsup">
      <button class="ic" aria-label="Во весь экран"><svg><use href="#zoomf"/></svg></button><button class="ic" aria-label="Увеличить область"><svg><use href="#zooma"/></svg></button><button class="ic" aria-label="Предыдущий вид"><svg><use href="#prev"/></svg></button><button class="ic" aria-label="Сечение"><svg><use href="#section"/></svg></button><button class="ic" aria-label="Динамический вид"><svg><use href="#dyn"/></svg></button><button class="ic" aria-label="Ориентация"><svg><use href="#orient"/></svg></button><i class="caret"></i><button class="ic" aria-label="Стиль отображения"><svg><use href="#cube"/></svg></button><i class="caret"></i><button class="ic" aria-label="Скрыть/показать"><svg><use href="#eye"/></svg></button><i class="caret"></i><button class="ic" aria-label="Внешний вид"><svg><use href="#ball"/></svg></button><button class="ic" aria-label="Сцена"><svg><use href="#scene"/></svg></button><i class="caret"></i><button class="ic" aria-label="Настройки вида"><svg><use href="#monitor"/></svg></button><i class="caret"></i>
    </div>
    <div class="docwin">
      <button class="ic" aria-label="Левая панель"><svg><use href="#pl"/></svg></button><button class="ic" aria-label="Правая панель"><svg><use href="#pr"/></svg></button><button class="ic" aria-label="Свернуть"><svg><use href="#min"/></svg></button><button class="ic" aria-label="Восстановить"><svg><use href="#rest"/></svg></button><button class="ic" aria-label="Закрыть"><svg><use href="#x"/></svg></button>
    </div>
  </div>

  <main class="work">
    <div class="features">
      <div class="ghosts"><svg><use href="#g-boss"/></svg><svg><use href="#g-rev"/></svg><svg><use href="#g-sweep"/></svg><svg><use href="#g-loft"/></svg><svg><use href="#g-boss"/></svg><svg><use href="#ghost"/></svg><svg><use href="#g-plane"/></svg><svg><use href="#g-dome"/></svg><svg><use href="#g-wrap"/></svg><svg><use href="#g-bend"/></svg><svg><use href="#g-box"/></svg><svg><use href="#g-wrap"/></svg><svg><use href="#g-rib"/></svg></div>
      <hr>
      <div class="ghosts"><svg><use href="#g-boss"/></svg><svg><use href="#g-sweep"/></svg><svg><use href="#ghost"/></svg></div>
      <div class="drop faint"><svg><use href="#g-box"/></svg><i class="caret"></i></div>
      <hr>
      <div class="drop"><svg><use href="#refgeo"/></svg><i class="caret"></i></div>
      <div class="drop"><svg><use href="#curve"/></svg><i class="caret"></i></div>
      <hr class="full">
    </div>

    <aside class="panel">
      <div class="grab"><span></span></div>
      <nav class="ptabs">
        <button aria-label="Дерево"><svg><use href="#asmtab"/></svg></button><button aria-label="Свойства"><svg><use href="#props"/></svg></button><button aria-label="Конфигурации"><svg><use href="#tree"/></svg></button><button aria-label="Размеры"><svg><use href="#target"/></svg></button><button class="on" aria-label="Отображение"><svg><use href="#ballk"/></svg></button>
      </nav>
      <div class="ptools">
        <button class="on" aria-label="Внешние виды"><svg><use href="#ball"/></svg></button><button aria-label="Надписи"><svg><use href="#decal"/></svg></button><button aria-label="Сцены"><svg><use href="#scenes"/></svg></button><button class="last" aria-label="Параметры"><svg><use href="#ballgear"/></svg></button>
      </div>
      <div class="phead"><h2>Внешние виды</h2><button class="round blue" aria-label="Справка">?</button></div>
      <div class="sort"><label for="sort">Порядок сортировки:</label><span class="pick"><select id="sort"><option>Иерархический</option></select></span></div>
      <ul class="ptree">
        <li><i class="caret"></i><svg><use href="#part"/></svg><span>Деталь</span></li>
        <li class="sub"><i class="caret side"></i><svg class="dot" viewBox="0 0 8 8"><circle cx="4" cy="4" r="3.500" fill="#168ba8"/><circle cx="2.800" cy="2.800" r="1.300" fill="#8fdcec"/></svg><span>цвет</span></li>
      </ul>
    </aside>

    <section class="view">
      <button class="splitter" aria-label="Свернуть панель"></button>
      <svg class="model" viewBox="196 82 828 494" preserveAspectRatio="xMinYMin slice" role="img" aria-label="Модель">
        <defs>
          <linearGradient id="hull" gradientUnits="userSpaceOnUse" x1="600" y1="290" x2="580" y2="362"><stop offset="0" stop-color="#00bdf4"/><stop offset=".22" stop-color="#00d0fb"/><stop offset=".45" stop-color="#04eeea"/><stop offset=".62" stop-color="#00f4d6"/><stop offset="1" stop-color="#00dfc8"/></linearGradient>
          <radialGradient id="shine" gradientUnits="userSpaceOnUse" cx="0" cy="0" r="1" gradientTransform="translate(515 287) rotate(12) scale(90 22)"><stop offset="0" stop-color="#2bffff"/><stop offset=".4" stop-color="#2bffff" stop-opacity=".8"/><stop offset="1" stop-color="#2bffff" stop-opacity="0"/></radialGradient>
          <linearGradient id="bow" gradientUnits="userSpaceOnUse" x1="690" y1="385" x2="813" y2="352"><stop offset="0" stop-color="#067a9c" stop-opacity="0"/><stop offset=".45" stop-color="#0690b0" stop-opacity=".35"/><stop offset=".75" stop-color="#06799c" stop-opacity=".75"/><stop offset="1" stop-color="#0a4468"/></linearGradient>
          <g id="tag" fill="none" stroke="#3dff3d" stroke-width="1"><path d="M-6-4 5-7v9l-11 3zM-3-2v5M0-3v5M3-4v5M5-2l4-1M6 0l4-1M7-4v5"/></g>
          <g id="mk" fill="none" stroke="#777" stroke-width="1"><path d="M-2-2 2 2M2-2-2 2"/></g>
        </defs>
        <g fill="#00ff00" fill-opacity=".05" stroke="#4dff4d" stroke-width="1">
          <path d="m365 292 123-34 377 106-118 38z"/>
          <path d="m371 301 123-34 379 107-124 38z"/>
          <path d="m373 310 123-34 377 107-124 38z"/>
          <path d="m373 318 123-34 377 108-124 37z"/>
          <path d="m373 327 123-34 377 108-124 37z"/>
        </g>
        <g fill="none" stroke="#3dff3d" stroke-width=".9">
          <path d="m369 291 11-3M378 290l5-1M388 288l5-2M373 293l6-2M383 292l6 1M375 301l11-3M389 299l8-3M378 303l9 0M377 310l11-3M391 308l8-3M380 312l8 0M377 318l11-3M391 316l8-3M380 320l8 0M377 327l11-3M391 325l8-3M380 329l8 0M365 292l10 3M371 301l9 2M373 310l9 2M373 318l9 2M373 327l9 2"/>
        </g>
        <g id="boat">
          <path fill="url(#hull)" d="M438.300 244.500 488 258.500 509.500 264.800 570 281 622 296.500 671 311 714 324 753 336.500 787 347 809 356Q811 372 808.500 384 804 397 795 404.500 788 409.500 775 409.500 758 408 741.500 404.300L710 397 663 384 616.500 371 568 357 525 344Q500 335 481.700 326.700 463 317 455 306 444 290 441 277 438 262 438.300 244.500z"/>
          <path fill="url(#shine)" d="M438.300 244.500 622 296.500 671 311 663 384 525 344Q500 335 481.700 326.700 463 317 455 306 444 290 441 277 438 262 438.300 244.500z"/>
          <path fill="url(#bow)" d="M671 311 714 324 753 336.500 787 347 809 356Q811 372 808.500 384 804 397 795 404.500 788 409.500 775 409.500 758 408 741.500 404.300L710 397 663 384z"/>
        </g>
        <g fill="none" stroke="#777f80" stroke-width="1.600">
          <path d="M441 277Q475 278.500 505.500 281.700T568 289.500Q595 293 621.500 299.500T670.500 312.500Q692 319 713.500 327.500T752.500 341Q770 348 785.500 357.500T809 381"/>
          <path d="M443.500 286Q475 287.500 502.500 291T566 298.500Q594 303 618.500 309T669.500 320Q691 326 712.500 332T750 351.500Q768 360 781 369.500T807 388"/>
          <path d="M447.500 295.500Q475 297.500 498.500 300.500T561.500 308.500Q590 314 614 319.500T664 331Q687 336.500 709.500 342T745.500 361Q763 370 776.500 379T802 397"/>
          <path d="M455 306Q475 308 493 310.500T555.500 318.500Q582 323 608.500 329T657.500 341.700Q680 348 701.500 355T739.500 371Q757 380 771.500 389.500T793 406"/>
          <path d="M468.500 318.500Q478 320 485.500 321T545 329.700Q572 334 599 340T648.500 352.500Q670 359 691.500 367.500T730.500 383.500Q750 392 765 401.500L777 409"/>
          <path d="M509.500 264.500Q508 280 498.500 300.500 491 316 481.700 326.700"/>
          <path d="M570 281Q568 299 555.500 318.500 545 334 525 344"/>
          <path d="M622.500 296.500Q618 320 599 340 587 351 568 357"/>
          <path d="M671 311Q668 329 648.500 352 636 364 616.500 370.500"/>
          <path d="M714.300 324.500Q711 346 691.500 367.500 678 380 663 384"/>
          <path d="M753.300 336.700Q751 362 730.500 383.500 721 392 710 397"/>
          <path d="M787 347Q783 372 771.500 389.500 764 401 750 407"/>
        </g>
        <g>
          <use href="#mk" x="505.500" y="281.700"/><use href="#mk" x="502.500" y="291"/><use href="#mk" x="498.500" y="300.500"/><use href="#mk" x="493" y="310.500"/><use href="#mk" x="485.500" y="321"/>
          <use href="#mk" x="568" y="289.500"/><use href="#mk" x="566" y="298.500"/><use href="#mk" x="561.500" y="308.500"/><use href="#mk" x="555.500" y="318.500"/><use href="#mk" x="545" y="329.700"/>
          <use href="#mk" x="621.500" y="299.500"/><use href="#mk" x="618.500" y="309"/><use href="#mk" x="614" y="319.500"/><use href="#mk" x="608.500" y="329"/><use href="#mk" x="599" y="340"/><use href="#mk" x="587.500" y="349"/>
          <use href="#mk" x="670.500" y="312.500"/><use href="#mk" x="669.500" y="320"/><use href="#mk" x="664" y="331"/><use href="#mk" x="657.500" y="341.700"/><use href="#mk" x="648.500" y="352.500"/><use href="#mk" x="632.500" y="363.500"/>
          <use href="#mk" x="713.500" y="327.500"/><use href="#mk" x="709.500" y="342"/><use href="#mk" x="701.500" y="355"/><use href="#mk" x="691.500" y="367.500"/>
          <use href="#mk" x="752.500" y="341"/><use href="#mk" x="750" y="351.500"/><use href="#mk" x="745.500" y="361"/><use href="#mk" x="739.500" y="371"/><use href="#mk" x="730.500" y="383.500"/>
          <use href="#mk" x="785.500" y="357.500"/><use href="#mk" x="781" y="369.500"/><use href="#mk" x="776.500" y="379"/><use href="#mk" x="771.500" y="389.500"/>
        </g>
        <g fill="none" stroke="#2df56a" stroke-width=".9">
          <path d="M484 327 747 402 790 388M500 339 749 412"/>
        </g>
        <g>
          <use href="#tag" x="480" y="338"/><use href="#tag" x="525" y="351"/><use href="#tag" x="570" y="364"/><use href="#tag" x="616" y="377.500"/><use href="#tag" x="662" y="391"/><use href="#tag" x="709" y="405"/><use href="#tag" x="757" y="418"/>
        </g>
        <g class="station"><text x="493" y="335">7</text><text x="538" y="348">6</text><text x="583" y="361">5</text><text x="629" y="375">4</text><text x="675" y="388">3</text><text x="722" y="402">2</text><text x="769" y="416">1</text></g>
        <g fill="none" stroke="#7c7c7c" stroke-width=".9" stroke-dasharray="7 2 1.500 2">
          <path d="M750 353 863 321M749 444 861 409M750 353 749 444M769 347 769 437M788 342 788 432M805 337 805 427M809 336 809 424M825 332 824 421M843 326 842 415M863 321 861 409M809 360 841 414M769 437 785 410M750 408 861 365M749 417 790 402M749 426 770 419"/>
        </g>
        <path fill="#666" d="M748 443h2v2h-2zM768 436h2v2h-2zM787 431h2v2h-2zM823 420h2v2h-2zM840 413h2v2h-2zM860 408h2v2h-2zM862 320h2v2h-2zM842 325h2v2h-2zM824 331h2v2h-2zM788 341h2v2h-2zM808 336h2v2h-2zM860 364h2v2h-2zM749 352h2v2h-2zM823 386h2v2h-2zM749 407h2v2h-2z"/>
        <text class="sketch" transform="translate(750 419) rotate(16)">Пл-ть шпунта</text>
        <path d="m802 426 11 4v8l-11-3z" fill="none" stroke="#f03030" stroke-width=".9"/>
        <path d="M805 435v-17M805 432l6-1M805 432l-3 2" stroke="#2233dd" stroke-width="1.300"/><path d="m805 413 2.500 6h-5z" fill="#2233dd"/>
        <g>
          <path d="M220.500 545v-11" stroke="#35b635" stroke-width="1.500"/><path d="m220.500 528 2.500 6.500h-5z" fill="#1b8a22"/>
          <path d="m221 544.500 6-1.200" stroke="#c22" stroke-width="2"/><path d="m232.500 542-6.500-1 1.200 5z" fill="#c42020"/>
          <path d="m220.500 545 7 2" stroke="#1122cc" stroke-width="2"/><path d="m233 548.500-6.500-3.700-.5 4.700z" fill="#1122bb"/>
          <text class="axis" x="219" y="525" fill="#7bc67b">Y</text><text class="axis" x="234" y="541" fill="#e08080">X</text><text class="axis" x="234" y="550" fill="#5060d0">Z</text>
        </g>
      </svg>
      <nav class="taskpane">
        <button aria-label="Ресурсы"><svg><use href="#globe"/></svg></button><button aria-label="Домой"><svg><use href="#home"/></svg></button><button aria-label="Библиотека"><svg><use href="#lib"/></svg></button><button aria-label="Проводник"><svg><use href="#folder"/></svg></button><button aria-label="Палитра видов"><svg><use href="#palette"/></svg></button><button class="on" aria-label="Внешние виды"><svg><use href="#ball"/></svg></button><button aria-label="Свойства"><svg><use href="#props"/></svg></button>
      </nav>
    </section>
  </main>

  <div class="strip"><span class="strip-left"></span><span class="thumb"></span><span class="strip-rest"></span></div>

  <div class="filters">
    <span class="grip"></span>
    <button class="ic wide" aria-label="Фильтр"><svg viewBox="0 0 12 12"><path d="M2 2h8L7 6v5H5V6z" fill="#eee" stroke="#c8c8c8" stroke-width=".9"/></svg></button>
    <button class="ic wide" aria-label="Очистить фильтры"><svg viewBox="0 0 12 12"><path d="M1 1h6L5 4.500V8H4V5zM5 4h6L9 7v4H7V7z" fill="#eee" stroke="#ccc" stroke-width=".8"/></svg></button>
    <button class="ic wide" aria-label="Все фильтры"><svg viewBox="0 0 12 12"><path d="M1 2c2-1 4-1 6 0l3 2-.5 2.500L9 11 7 9.500V7L3 5z" fill="#b07acb" stroke="#80509c" stroke-width=".7"/><path d="m3 3 5 3M8 4v6" stroke="#7d4f98" stroke-width=".6"/></svg></button>
    <button class="ic picked" aria-label="Выбрать"><svg><use href="#cursor"/></svg></button><button class="dd boxed" aria-label="Ещё"></button>
    <button class="ic wide" aria-label="Инвертировать выбор"><svg viewBox="0 0 12 12"><path d="M2 1v7l2-1.500L6 10M5 1l5 5H7.500l1 4M11 1 1 11" fill="#ddd" stroke="#c2c2c2" stroke-width=".9"/></svg></button>
    <span class="bar"></span>
    <div class="flist">
      <svg><use href="#f1"/></svg><svg><use href="#f2"/></svg><svg><use href="#f3"/></svg><svg><use href="#f4"/></svg><svg><use href="#f5"/></svg><svg><use href="#f6"/></svg><svg><use href="#f7"/></svg><svg><use href="#f8"/></svg><svg><use href="#f9"/></svg><svg><use href="#f10"/></svg><svg><use href="#f11"/></svg><svg><use href="#f12"/></svg><svg><use href="#f13"/></svg><svg><use href="#f14"/></svg><svg><use href="#f15"/></svg><svg><use href="#f16"/></svg><svg><use href="#f17"/></svg><svg><use href="#f18"/></svg><svg><use href="#f19"/></svg><svg><use href="#f20"/></svg><svg><use href="#f21"/></svg><svg><use href="#f22"/></svg><svg><use href="#f23"/></svg><svg><use href="#f24"/></svg><svg><use href="#f25"/></svg><svg><use href="#f26"/></svg><svg><use href="#f27"/></svg><svg><use href="#f28"/></svg><svg><use href="#f29"/></svg>
    </div>
    <span class="bar"></span>
  </div>

  <footer class="status">
    <span class="hint">Выберите объекты, чтобы изменить их внешний вид</span>
    <span>Определенный</span><span class="mode">Редактируется Сборка</span><span class="setup">Настройка</span><i class="caret"></i>
    <svg viewBox="0 0 12 12"><path d="m1 4 5-3 5 3.500v3L7 11 1 7z" fill="#ddd" stroke="#888"/><path d="m2 2 8 8M4 6l4-3" stroke="#888"/></svg>
  </footer>
</div>
</body>
</html>
```
FILE: styles.css
```css
* { box-sizing: border-box; }
html, body { height: 100%; }
body {
  margin: 0;
  overflow: hidden;
  background: #f7f7f7;
  color: #333;
  font: 7px/9px Roboto, "Open Sans", sans-serif;
}
button { margin: 0; padding: 0; border: 0; background: none; color: inherit; font: inherit; }
h1, h2, ul { margin: 0; padding: 0; font: inherit; list-style: none; }
.defs { position: absolute; }

.app { display: flex; flex-direction: column; height: 100vh; }

.ic { display: flex; flex: none; align-items: center; justify-content: center; width: 12px; }
.ic svg { width: 12px; height: 12px; }
.caret, .dd::after {
  display: block;
  flex: none;
  width: 0;
  height: 0;
  border: 2px solid transparent;
  border-top-color: #555;
  border-bottom: 0;
}
.dd::after { content: ""; }

/* Title bar */
.titlebar {
  display: flex;
  flex: none;
  align-items: center;
  height: 21px;
  border-bottom: 1px solid #dcdcdc;
}
.brand { display: flex; align-items: center; width: 76px; padding-left: 2px; color: #d92b2b; }
.mark { width: 14px; height: 14px; }
.wordmark { font: italic 9px/12px "Open Sans", sans-serif; }
.expand { width: 11px; height: 20px; padding-left: 2px; border-right: 1px solid #ddd; }
.expand::after { content: ""; display: block; width: 0; border: 4px solid transparent; border-left: 5px solid #666; border-right: 0; }
.quick { display: flex; align-items: center; height: 20px; margin-left: 10px; }
.dd { display: flex; align-items: center; justify-content: center; width: 13px; height: 18px; }
.narrow { width: 10px; }
.gap { width: 6px; }
.gap.short { width: 4px; }
.faint { opacity: .5; }
.picked { width: 17px; height: 18px; background: #b5b5b5; }
.boxed { width: 7px; border: 1px solid #c4c4c4; background: #fff; }
.doc-title { flex: 1; padding-right: 4px; color: #333; text-align: center; }
.title-right { display: flex; align-items: center; }
.search {
  display: flex;
  align-items: center;
  width: 138px;
  height: 14px;
  padding: 0 3px;
  border: 1px solid #d5d5d5;
  background: #fff;
}
.search .prompt { width: 8px; height: 8px; }
.search .mag { width: 10px; height: 10px; margin-right: 4px; }
.search input { flex: 1; min-width: 0; padding: 0 4px; border: 0; outline: 0; background: none; font: inherit; }
.search input::placeholder { color: #777; opacity: 1; }
.win { display: flex; align-items: center; gap: 10px; padding: 0 8px 0 6px; color: #555; }
.round {
  width: 11px;
  height: 11px;
  border: 1px solid #666;
  border-radius: 50%;
  color: #444;
  font: 600 8px/9px "Open Sans", sans-serif;
}
.round.blue { border-color: #888; background: #eef4f8; color: #1a5f86; font-weight: 700; }

/* Ribbon */
.ribbon {
  display: grid;
  flex: none;
  grid-template-columns: 52px 42px 44px 82px 60px 46px 47px 44px 36px 43px 50px 52px 71px 26px 44px 30px 36px 1fr;
  height: 47px;
  border-bottom: 1px solid #c9c9c9;
}
.cmd { display: flex; flex-direction: column; align-items: center; padding: 3px 0 4px; white-space: nowrap; }
.cmd svg { flex: none; width: 12px; height: 12px; }
.cmd span { padding-top: 1px; }
.cmd .caret { margin-top: auto; }
.cmd.end { border-right: 1px solid #e0e0e0; }
.cmd:disabled { color: #c3c3c3; }
.collapse { display: flex; align-items: flex-end; justify-content: flex-end; padding: 0 4px 4px 0; }
.collapse svg { width: 8px; height: 6px; }

/* Tab row */
.tabrow { display: flex; flex: none; height: 14px; background: #fff; }
.tabs { display: grid; grid-template-columns: 34px 58px 26px 53px 60px 97px; height: 13px; font-family: "Open Sans", sans-serif; }
.tabs button { border-right: 1px solid #a9a9a9; background: #d2d2d2; white-space: nowrap; }
.tabs .on { background: #f7f7f7; font-weight: 700; }
.headsup { display: flex; flex: 1; align-items: center; justify-content: center; gap: 3px; padding-top: 2px; }
.headsup .caret { opacity: .6; }
.docwin { display: flex; align-items: center; justify-content: flex-end; gap: 3px; width: 134px; padding: 2px 4px 0 0; color: #999; }

/* Work area */
.work { display: flex; flex: 1; min-height: 0; }
.features { display: flex; flex: none; flex-direction: column; width: 28px; padding: 5px 0 0 3px; }
.ghosts { display: flex; flex-direction: column; opacity: .8; }
.features svg { flex: none; width: 12px; height: 15px; }
.features hr { width: 25px; height: 2px; margin: 1px 0; border: 0; background: #dcdcdc; }
.features .full { width: 28px; height: 1px; margin: 2px 0 0 -3px; background: #c5c5c5; }
.drop { display: flex; align-items: center; gap: 7px; height: 15px; }

.panel { display: flex; flex: none; flex-direction: column; width: 168px; border-right: 1px solid #c4c4c4; }
.grab { display: flex; align-items: center; justify-content: center; height: 13px; border-top: 1px solid #ddd; }
.grab span { width: 4px; height: 4px; border: 1px solid #aaa; border-radius: 50%; }
.ptabs { display: flex; height: 15px; }
.ptabs button { display: flex; align-items: center; justify-content: center; width: 21px; border: 1px solid #b9b9b9; border-left: 0; background: #d4d4d4; }
.ptabs .on { border-bottom: 0; background: #f7f7f7; }
.ptabs svg, .ptools svg { width: 12px; height: 12px; }
.ptools { display: flex; height: 18px; border-bottom: 1px solid #ccc; }
.ptools button { display: flex; align-items: center; justify-content: center; width: 16px; height: 16px; }
.ptools .on { background: #bdbdbd; }
.ptools .last { margin-left: auto; margin-right: 2px; }
.phead { display: flex; align-items: center; height: 16px; padding-right: 3px; border-bottom: 1px solid #ccc; }
.phead h2 { flex: 1; padding-right: 1px; color: #222; font: 700 7px/9px "Open Sans", sans-serif; text-align: center; }
.sort { display: flex; align-items: center; gap: 2px; height: 11px; margin-top: 5px; font-size: 6px; white-space: nowrap; }
.sort label { flex: none; min-width: 61px; }
.pick { display: flex; align-items: center; width: 58px; }
.sort select {
  flex: none;
  width: 100%;
  height: 11px;
  padding: 0 10px 0 2px;
  border: 1px solid #c2c2c2;
  border-radius: 0;
  appearance: none;
  background: #e1e1e1;
  color: #333;
  font: inherit;
}
.pick::after {
  content: "";
  flex: none;
  width: 4px;
  height: 4px;
  margin: 0 4px 2px -8px;
  border: solid #777;
  border-width: 0 1px 1px 0;
  transform: rotate(45deg);
  pointer-events: none;
}
.ptree { padding-top: 1px; }
.ptree li { display: flex; align-items: center; height: 13px; padding-left: 4px; }
.ptree svg { width: 12px; height: 12px; margin: 0 2px 0 8px; }
.ptree .sub { padding-left: 19px; }
.ptree .dot { width: 8px; height: 8px; margin: 0 4px 0 8px; }
.side { transform: rotate(-90deg); }

/* Viewport */
.view { position: relative; flex: 1; min-width: 0; overflow: hidden; background: #fff; }
.model { display: block; width: 100%; height: 100%; }
.station { fill: #3dff3d; font: bold 6px "Liberation Sans", sans-serif; }
.axis { font: 5px "Liberation Sans", sans-serif; }
.sketch { fill: #ee2222; font: bold 10px "Liberation Serif", serif; }
.splitter {
  position: absolute;
  top: 233px;
  left: 0;
  width: 5px;
  height: 24px;
  border: 1px solid #c4c4c4;
  border-left: 0;
  background: #f7f7f7;
}
.splitter::after { content: ""; display: block; width: 3px; height: 3px; border-radius: 50%; background: #aaa; }
.taskpane { position: absolute; top: 26px; right: 0; width: 16px; border: 1px solid #aaa; border-right: 0; }
.taskpane button { display: flex; align-items: center; justify-content: center; width: 100%; height: 14px; border-bottom: 1px solid #aaa; background: #d2d2d2; }
.taskpane button:last-child { height: 15px; border-bottom: 0; }
.taskpane .on { background: #fff; }
.taskpane svg { width: 12px; height: 12px; }

/* Bottom bars */
.strip { display: flex; flex: none; height: 10px; }
.strip-left { width: 168px; margin-left: 27px; border-bottom: 1px solid #d5d5d5; }
.thumb { width: 6px; background: #cfcfcf; }
.strip-rest { flex: 1; border-top: 1px solid #c9c9c9; }
.filters { display: flex; flex: none; align-items: center; height: 19px; padding-top: 2px; border-bottom: 1px solid #c9c9c9; }
.grip { width: 2px; height: 14px; margin: 0 2px; border-left: 2px dotted #ccc; }
.filters .wide { width: 15px; }
.filters .picked { width: 21px; height: 16px; }
.filters .boxed { width: 6px; height: 16px; }
.filters .bar { width: 1px; height: 15px; margin: 0 2px; background: #bbb; }
.flist { display: flex; justify-content: space-between; width: 452px; }
.flist svg { width: 14px; height: 14px; }
.status { display: flex; flex: none; height: 9px; overflow: hidden; line-height: 13px; white-space: nowrap; }
.hint { flex: 1; }
.status .mode { margin-left: 7px; }
.status .setup { margin-left: 49px; }
.status .caret { margin: 6px 9px 0 8px; }
.status svg { width: 12px; height: 12px; margin-right: 2px; }
```
